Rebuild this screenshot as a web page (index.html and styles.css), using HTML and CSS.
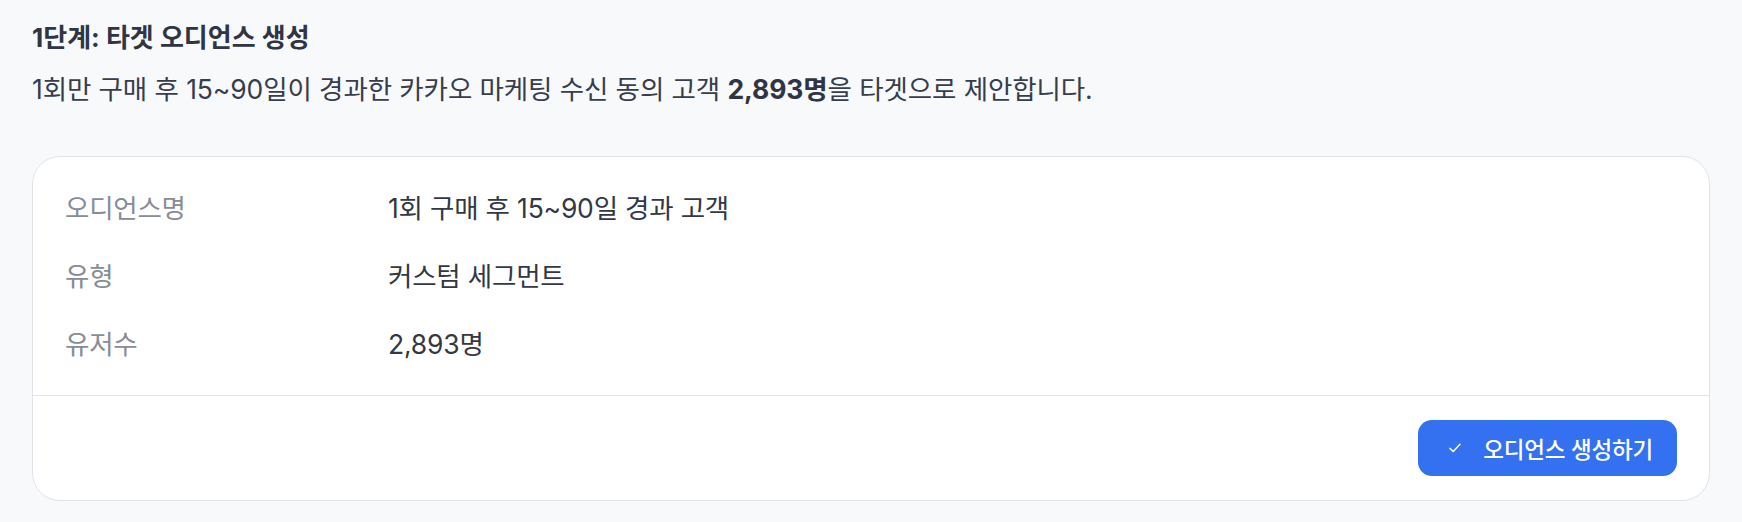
FILE: index.html
```html
<!DOCTYPE html>
<html lang="ko">
<head>
<meta charset="utf-8">
<title>1단계: 타겟 오디언스 생성</title>
<link rel="stylesheet" href="styles.css">
</head>
<body>
<main class="page">
  <section class="step">
    <h2 class="step-title">1단계: 타겟 오디언스 생성</h2>
    <p class="step-desc">1회만 구매 후 15~90일이 경과한 카카오 마케팅 수신 동의 고객 <strong>2,893명</strong>을 타겟으로 제안합니다.</p>
  </section>
  <section class="card">
    <dl class="card-body">
      <div class="row"><dt class="label">오디언스명</dt><dd class="value">1회 구매 후 15~90일 경과 고객</dd></div>
      <div class="row"><dt class="label">유형</dt><dd class="value">커스텀 세그먼트</dd></div>
      <div class="row"><dt class="label">유저수</dt><dd class="value">2,893명</dd></div>
    </dl>
    <div class="card-footer">
      <button class="btn-primary" type="button">
        <svg class="btn-icon" width="12" height="10" viewBox="0 0 12 10" aria-hidden="true"><path d="M1 5.4 L4.2 8.5 L11 1.3" fill="none" stroke="#fff" stroke-width="1.5" stroke-linecap="round" stroke-linejoin="round"/></svg>
        <span>오디언스 생성하기</span>
      </button>
    </div>
  </section>
</main>
</body>
</html>
```

FILE: styles.css
```css
* { box-sizing: border-box; }
html, body { margin: 0; padding: 0; }
body {
  background: #f8f9fb;
  font-family: "Inter", "Noto Sans CJK KR", sans-serif;
  color: #323846;
}
.page {
  padding: 20px 32px 22px;
}
.step { margin-bottom: 48px; }
.step-title {
  margin: 0;
  font-size: 26px;
  font-weight: 700;
  line-height: 36px;
  color: #2f3544;
  letter-spacing: 0;
}
.step-desc {
  margin: 14px 0 0;
  font-size: 26.5px;
  line-height: 38px;
  color: #373d4b;
  letter-spacing: -0.1px;
}
.step-desc strong { font-weight: 700; color: #2f3544; }
.card {
  background: #fff;
  border: 1px solid #e1e3e9;
  border-radius: 28px;
}
.card-body {
  margin: 0;
  padding: 17px 32px 17px;
}
.row {
  display: grid;
  grid-template-columns: 323px 1fr;
  align-items: center;
  height: 68px;
  line-height: 38px;
}
.label {
  font-size: 26.5px;
  color: #878c95;
  letter-spacing: -0.25px;
}
.value {
  margin: 0;
  font-size: 26.5px;
  color: #323846;
  letter-spacing: -0.2px;
}
.card-footer {
  border-top: 1px solid #e1e3e9;
  padding: 24px 32px;
  display: flex;
  justify-content: flex-end;
}
.btn-primary {
  display: flex;
  align-items: center;
  gap: 22px;
  height: 56px;
  padding: 0 24px 0 31px;
  border: 0;
  border-radius: 14px;
  background: #3471f0;
  color: #fff;
  font-family: inherit;
  font-size: 22.5px;
  font-weight: 500;
  letter-spacing: -0.2px;
}
.btn-icon { display: block; }
```
